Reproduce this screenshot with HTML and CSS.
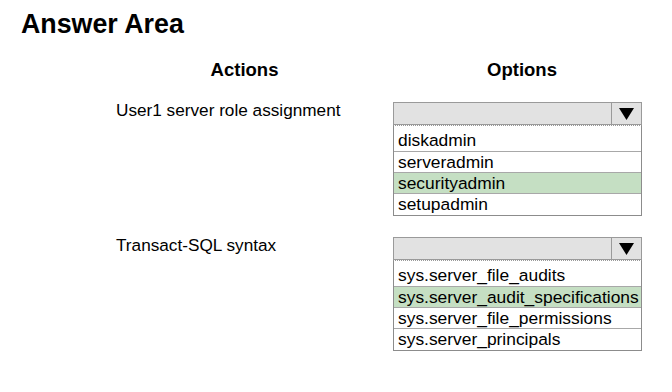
FILE: index.html
```html
<html lang="en">
  <head>
    <meta name="viewport" content="width=device-width,initial-scale=1">
    <title>Answer Area</title>
    <link rel="stylesheet" href="styles.css">
  </head>
<body>
  <h1 class="title">Answer Area</h1>
  <div class="answer-grid">
    <div class="col-head">Actions</div>
    <div class="col-head options-head">Options</div>

    <div class="label">User1 server role assignment</div>
    <div class="dropdown">
      <div class="select">
        <div class="select-value"></div>
        <div class="arrow">
          <svg width="15" height="12" viewBox="0 0 15 12"><polygon points="0,0 15,0 7.5,12" fill="#000"/></svg>
        </div>
      </div>
      <div class="list">
        <div class="item">diskadmin</div>
        <div class="item">serveradmin</div>
        <div class="item selected">securityadmin</div>
        <div class="item">setupadmin</div>
      </div>
    </div>

    <div class="label">Transact-SQL syntax</div>
    <div class="dropdown">
      <div class="select">
        <div class="select-value"></div>
        <div class="arrow">
          <svg width="15" height="12" viewBox="0 0 15 12"><polygon points="0,0 15,0 7.5,12" fill="#000"/></svg>
        </div>
      </div>
      <div class="list">
        <div class="item">sys.server_file_audits</div>
        <div class="item selected">sys.server_audit_specifications</div>
        <div class="item">sys.server_file_permissions</div>
        <div class="item">sys.server_principals</div>
      </div>
    </div>
  </div>
</body>
</html>
```

FILE: styles.css
```css
html, body {
  padding: 0;
  margin: 0;
  background: #fff;
  color: #000;
  font-family: "Liberation Sans", Arial, sans-serif;
}
.title {
  margin: 0 0 0 21px;
  padding-top: 9px;
  font-size: 26.8px;
  line-height: 30px;
  font-weight: bold;
}
.answer-grid {
  display: grid;
  grid-template-columns: 257px 249px;
  column-gap: 20px;
  row-gap: 21px;
  margin: 20px 0 0 116px;
}
.col-head {
  font-size: 18.5px;
  line-height: 22px;
  font-weight: bold;
  text-align: center;
}
.options-head {
  padding-left: 9px;
}
.label {
  font-size: 17.2px;
  line-height: 16px;
}
.dropdown {
  display: flex;
  flex-direction: column;
}
.select {
  display: flex;
  height: 23px;
  box-sizing: border-box;
  border: 1px solid #9a9a9a;
  background: #e2e2e2;
}
.select-value {
  flex: 1;
}
.arrow {
  width: 29px;
  border-left: 1px solid #9a9a9a;
  display: flex;
  align-items: center;
  justify-content: center;
}
.list {
  border: 1px solid #8c8c8c;
  border-top: 1px dotted #9a9a9a;
  padding: 4px 0 1px;
}
.item {
  font-size: 17.4px;
  line-height: 20px;
  padding-left: 4px;
  border-top: 1px solid #a8a8a8;
}
.item:first-child {
  border-top: none;
  line-height: 21px;
}
.selected {
  background: #c5dfc3;
}
```
